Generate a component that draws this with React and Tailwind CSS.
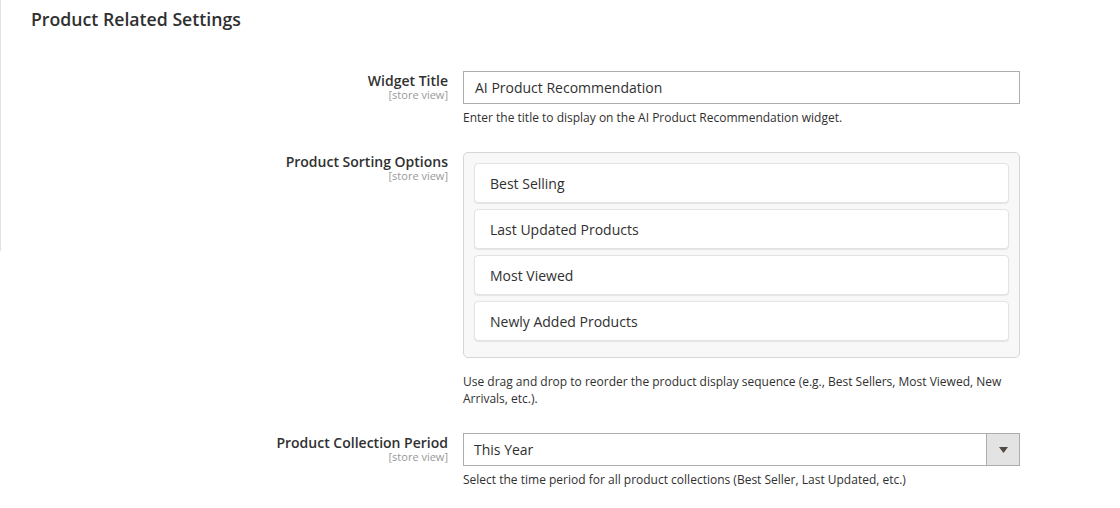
import React from "react";

const font = { fontFamily: '"Open Sans", "Liberation Sans", sans-serif' };

const sortOptions = ["Best Selling", "Last Updated Products", "Most Viewed", "Newly Added Products"];

const FieldLabel = ({ title }) => (
    <div className="w-[448px] shrink-0 text-right pt-[2px]">
        <div className="text-[14px] font-semibold leading-[16px] text-[#303030]">{title}</div>
        <div className="text-[11px] leading-[12px] text-[#999]">[store view]</div>
    </div>
);

const Note = ({ children }) => (
    <p className="mt-[5px] text-[12px] leading-[17px] text-[#303030]">{children}</p>
);

const App = () => {
    return (
        <div className="w-[1120px] h-[508px] bg-white flex" style={font}>
            <div className="w-px h-[251px] bg-[#e3e3e3] shrink-0" />
            <div className="flex-1">
                <h2 className="pl-[30px] pt-[8px] text-[17.7px] font-semibold leading-[22px] text-[#303030]">
                    Product Related Settings
                </h2>

                <div className="mt-[41px] flex gap-[15px]">
                    <div className="-ml-px"><FieldLabel title="Widget Title" /></div>
                    <div className="w-[557px]">
                        <div className="h-[33px] border border-[#adadad] bg-white px-[11px] flex items-center text-[14px] text-[#303030]">
                            AI Product Recommendation
                        </div>
                        <Note>Enter the title to display on the AI Product Recommendation widget.</Note>
                    </div>
                </div>

                <div className="mt-[26px] flex gap-[15px]">
                    <div className="-ml-px"><FieldLabel title="Product Sorting Options" /></div>
                    <div className="w-[557px]">
                        <div className="border border-[#d6d6d6] rounded-[5px] bg-[#f8f8f8] pt-[10px] pb-[16px] px-[10px] flex flex-col gap-[6px]">
                            {sortOptions.map((opt) => (
                                <div
                                    key={opt}
                                    className="h-[40px] bg-white border border-[#e3e3e3] rounded-[4px] shadow-[0_1px_1px_rgba(0,0,0,0.08)] flex items-center pl-[15px] text-[14px] text-[#303030]"
                                >
                                    {opt}
                                </div>
                            ))}
                        </div>
                        <p className="mt-[15px] text-[12px] leading-[17px] text-[#303030] pr-[12px]">
                            Use drag and drop to reorder the product display sequence (e.g., Best Sellers, Most Viewed, New Arrivals, etc.).
                        </p>
                    </div>
                </div>

                <div className="mt-[26px] flex gap-[15px]">
                    <div className="-ml-px"><FieldLabel title="Product Collection Period" /></div>
                    <div className="w-[557px]">
                        <div className="h-[33px] border border-[#adadad] bg-white flex text-[14px] text-[#303030]">
                            <div className="flex-1 flex items-center px-[10px]">This Year</div>
                            <div className="w-[33px] border-l border-[#adadad] bg-[#e3e3e3] flex items-center justify-center">
                                <svg width="9" height="6" viewBox="0 0 9 6">
                                    <path d="M0 0h9L4.5 6z" fill="#514943" />
                                </svg>
                            </div>
                        </div>
                        <Note>Select the time period for all product collections (Best Seller, Last Updated, etc.)</Note>
                    </div>
                </div>
            </div>
        </div>
    );
};

export default App;
